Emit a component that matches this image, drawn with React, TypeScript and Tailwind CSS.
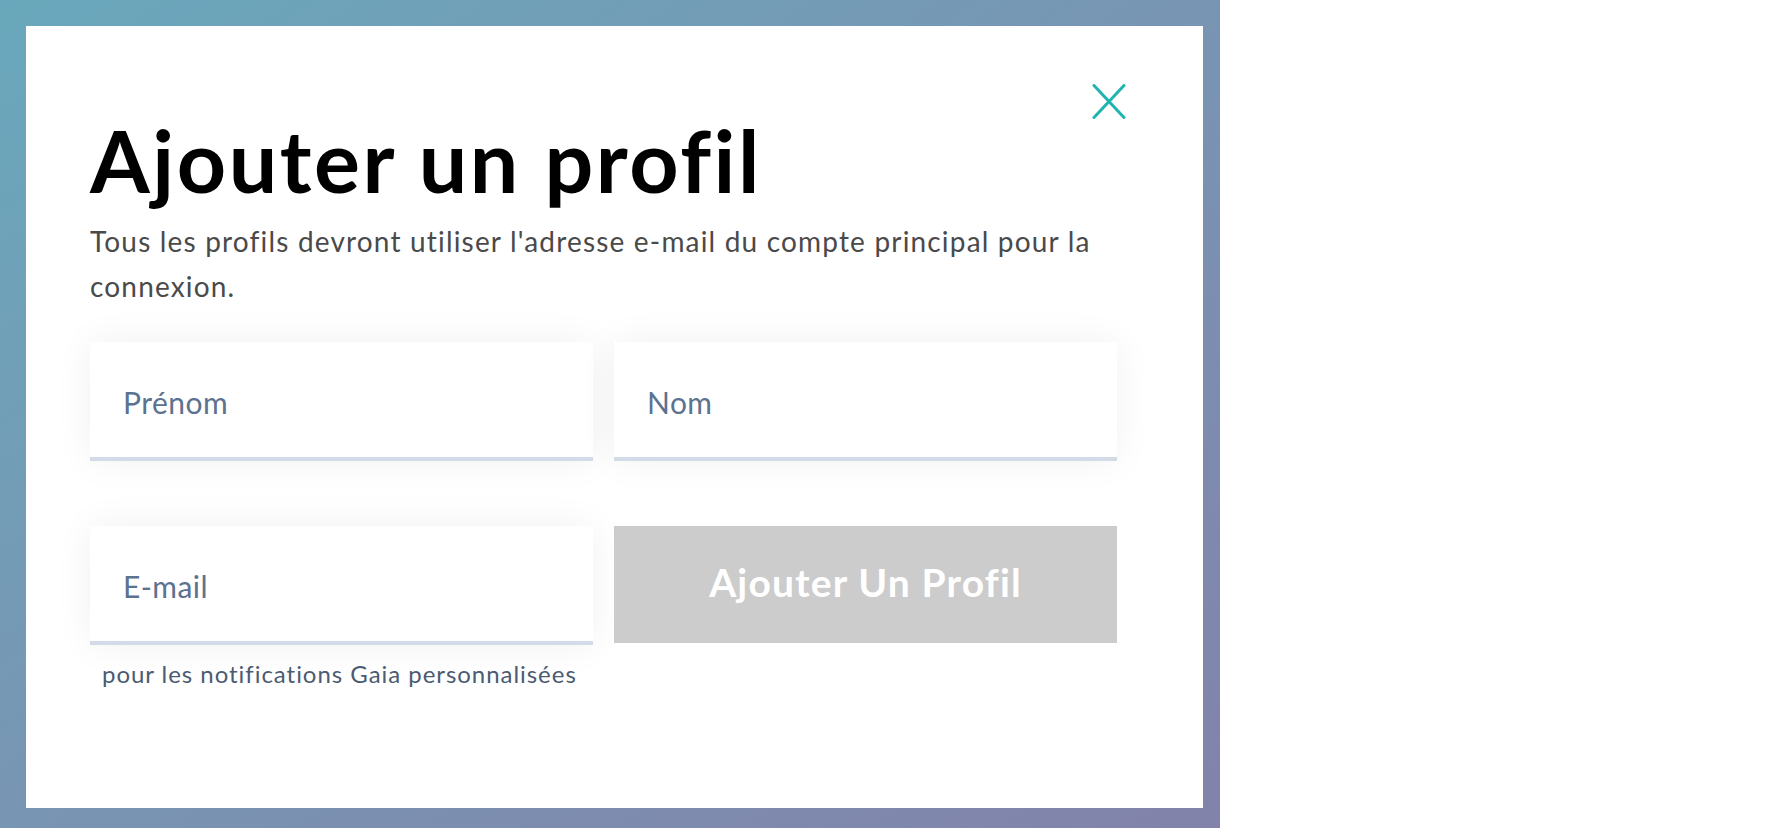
import React, { useState } from "react";

const CloseIcon = () => (
  <svg width="34" height="35" viewBox="0 0 34 35" fill="none">
    <path d="M2 1.5L32 33.5M32 1.5L2 33.5" stroke="#1fb4b0" strokeWidth="3" strokeLinecap="round" />
  </svg>
);

interface FieldProps {
  placeholder: string;
  value: string;
  onChange: (v: string) => void;
}

const Field = ({ placeholder, value, onChange }: FieldProps) => (
  <div className="h-[119px] bg-white border-b-4 border-[#d3dbe6] shadow-[0_0_36px_rgba(0,0,0,0.06)]">
    <input
      type="text"
      value={value}
      placeholder={placeholder}
      onChange={(e) => onChange(e.target.value)}
      className="w-full h-full pl-[33px] pt-[4px] bg-transparent outline-none text-[30px] tracking-[0.015em] text-[#3f546d] placeholder:text-[#5b7290]"
    />
  </div>
);

export default function App() {
  const [firstName, setFirstName] = useState<string>("");
  const [lastName, setLastName] = useState<string>("");
  const [email, setEmail] = useState<string>("");

  return (
    <div className="min-h-screen w-full bg-white flex font-['Lato',sans-serif] [font-variant-ligatures:none]">
      <div className="w-[1220px] h-[828px] bg-linear-to-br from-[#69a8bc] to-[#8282aa] pl-[26px] pt-[26px]">
        <div className="relative w-[1177px] h-[782px] bg-white pl-[64px] pt-[91px]">
          <button className="absolute top-[58px] right-[77px]" type="button">
            <CloseIcon />
          </button>

          <h1 className="text-[86px] leading-none font-bold tracking-[0.03em] text-black">Ajouter un profil</h1>
          <p className="mt-[16px] text-[28px] leading-[45px] tracking-[0.042em] text-[#4a4a4a]">
            Tous les profils devront utiliser l'adresse e-mail du compte principal pour la
            <br />
            connexion.
          </p>

          {/* form */}
          <form
            className="mt-[33px] w-[1027px] grid grid-cols-2 gap-x-[21px] gap-y-[65px] items-start"
            onSubmit={(e) => e.preventDefault()}
          >
            <Field placeholder="Prénom" value={firstName} onChange={setFirstName} />
            <Field placeholder="Nom" value={lastName} onChange={setLastName} />
            <div>
              <Field placeholder="E-mail" value={email} onChange={setEmail} />
              <p className="mt-[15px] pl-[12px] text-[24px] leading-[1.2] tracking-[0.04em] text-[#4b5b72]">
                pour les notifications Gaia personnalisées
              </p>
            </div>
            <button
              type="submit"
              className="h-[117px] bg-[#cccccc] text-white font-bold text-[39px] tracking-[0.03em] pb-[4px]"
            >
              Ajouter Un Profil
            </button>
          </form>
        </div>
      </div>
    </div>
  );
}
